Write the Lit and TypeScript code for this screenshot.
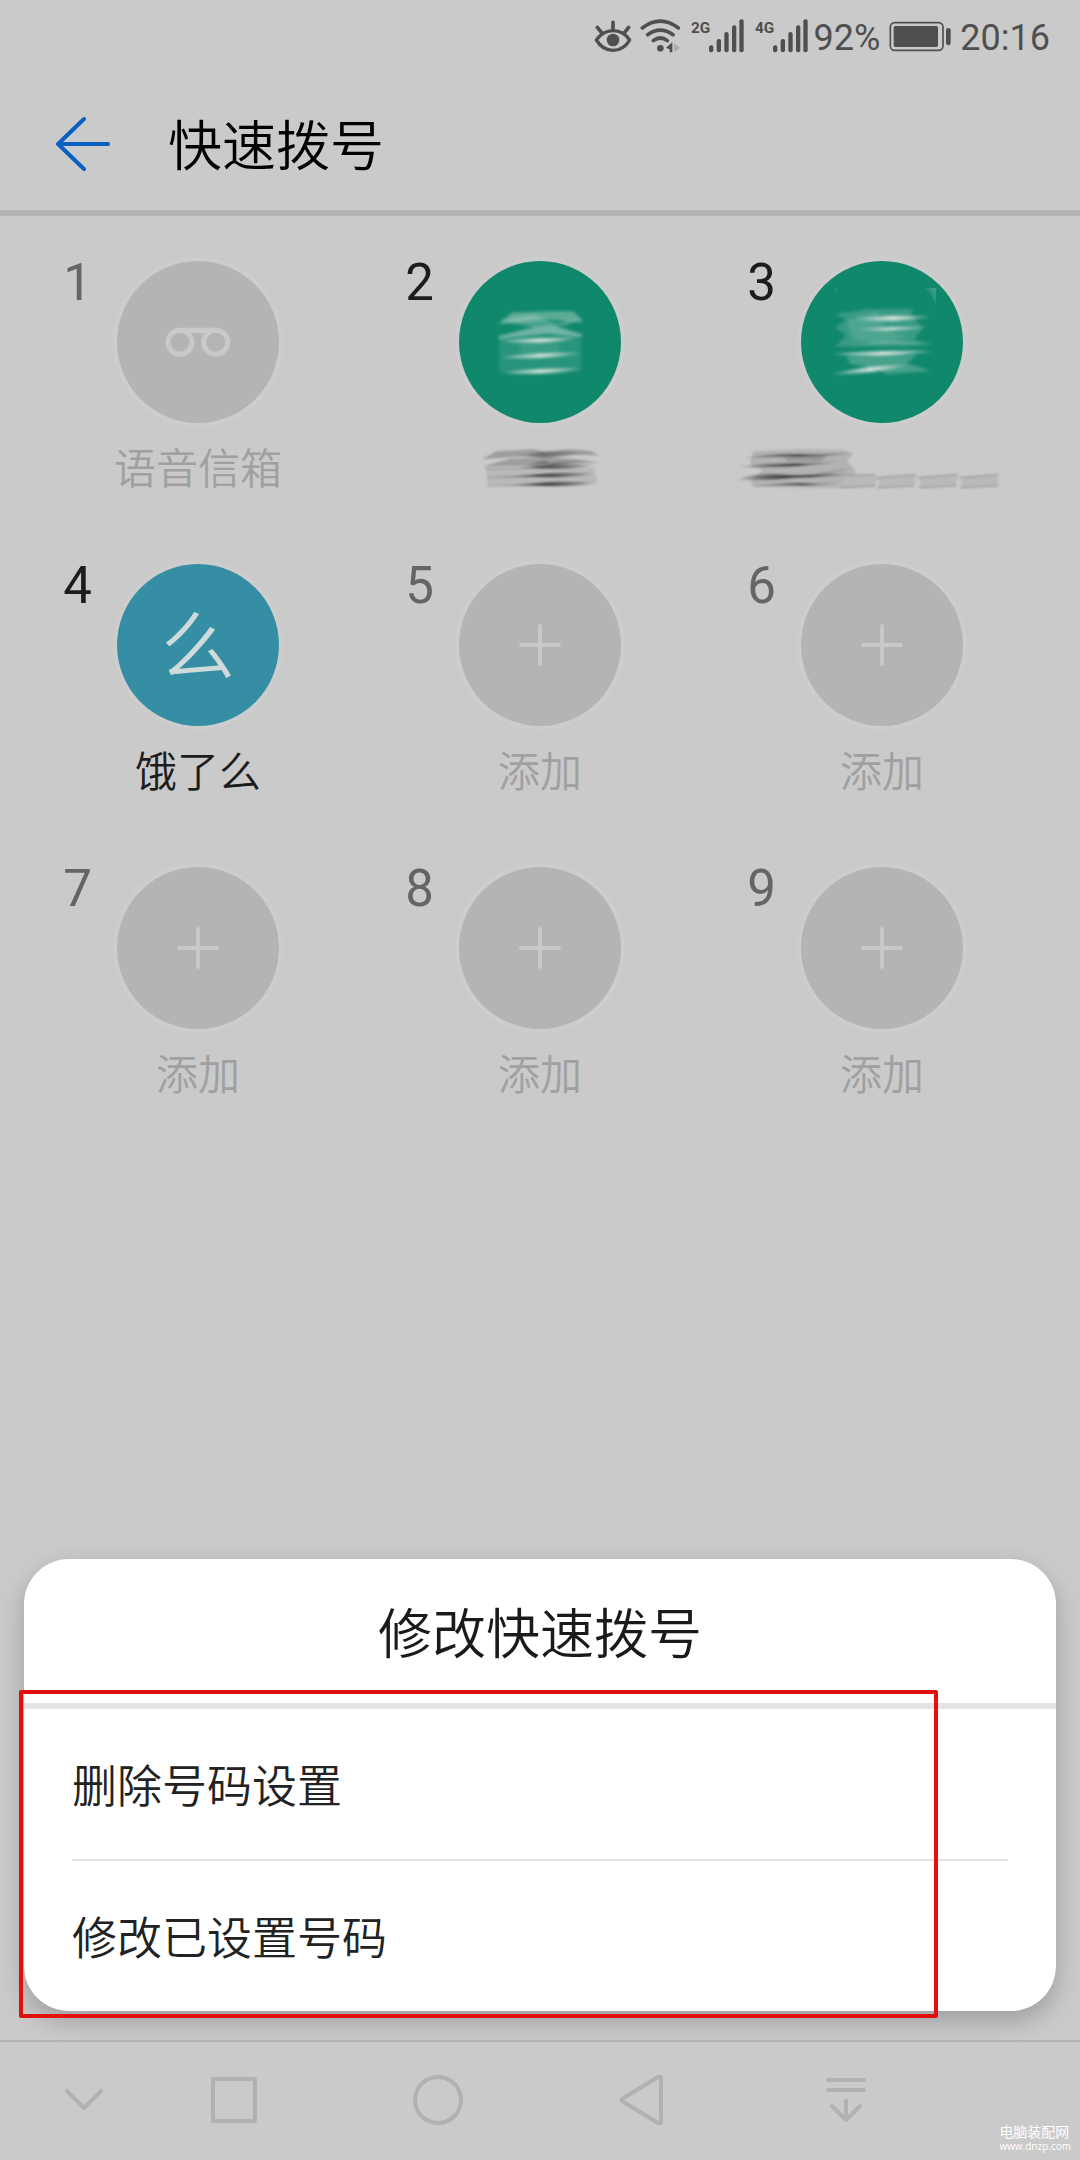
import { LitElement, html, css, svg, nothing } from "lit";
import { customElement, property } from "lit/decorators.js";
import { classMap } from "lit/directives/class-map.js";

type Kind = "voicemail" | "scribbleA" | "scribbleB" | "contact" | "add";

interface Slot {
  digit: number;
  kind: Kind;
  label: string;
}

const SLOTS: Slot[] = [
  { digit: 1, kind: "voicemail", label: "语音信箱" },
  { digit: 2, kind: "scribbleA", label: "" },
  { digit: 3, kind: "scribbleB", label: "" },
  { digit: 4, kind: "contact", label: "饿了么" },
  { digit: 5, kind: "add", label: "添加" },
  { digit: 6, kind: "add", label: "添加" },
  { digit: 7, kind: "add", label: "添加" },
  { digit: 8, kind: "add", label: "添加" },
  { digit: 9, kind: "add", label: "添加" },
];

const FONT = css`"Roboto", "Noto Sans CJK SC", sans-serif`;

@customElement("status-bar")
class StatusBar extends LitElement {
  static styles = css`
    :host {
      display: flex;
      align-items: center;
      justify-content: flex-end;
      gap: 4px;
      height: 74px;
      padding: 0 30px 4px 0;
      color: #4f4f4f;
      font: 400 36px/40px ${FONT};
    }
    svg {
      display: block;
      height: 40px;
      flex: none;
    }
    span {
      padding-top: 2px;
    }
    .signals {
      display: flex;
      gap: 8px;
    }
    .net {
      font: 700 46px "Roboto", sans-serif;
      fill: currentColor;
    }
  `;

  private signal(name: string) {
    return html`<svg width="56" viewBox="327 51 168 120" fill="currentColor" role="img" aria-label=${name}>
      <text class="net" x="330" y="98">${name}</text>
      <rect x="384" y="136" width="13" height="21" rx="6" />
      <rect x="407" y="117" width="13" height="40" rx="6" />
      <rect x="430" y="96" width="13" height="61" rx="6" />
      <rect x="453" y="76" width="13" height="81" rx="6" />
      <rect x="475" y="58" width="13" height="99" rx="6" />
    </svg>`;
  }

  render() {
    return html`
      <svg width="40" viewBox="42 51 120 120" fill="none" stroke="currentColor" stroke-width="10" stroke-linecap="round" stroke-linejoin="round">
        <path d="M49 120C62 102 79 92 99 92S137 102 149 120C137 141 119 151 99 151S62 141 49 120Z" />
        <circle cx="99" cy="120" r="19" fill="currentColor" stroke="none" />
        <path d="M99 67V88M52 82L64 97M146 82L134 97" stroke-width="11" />
      </svg>
      <svg width="48" viewBox="174 51 144 120" fill="none" stroke="currentColor" stroke-width="11" stroke-linecap="round">
        <path d="M187 84Q241 43 295 84M203 104Q241 77 279 104M220 122Q241 106 262 122" />
        <circle cx="241" cy="145" r="10" fill="currentColor" stroke="none" />
        <path d="M258 143L277 127V157H269V148Z" fill="currentColor" stroke="none" />
        <path d="M282 130L300 143L282 156Z" fill="#ababab" stroke="none" />
      </svg>
      <div class="signals">${this.signal("2G")}${this.signal("4G")}</div>
      <span>92%</span>
      <svg width="72" viewBox="912 51 216 120" fill="currentColor">
        <rect x="931" y="68" width="158" height="83" rx="13" fill="none" stroke="currentColor" stroke-width="5" />
        <rect x="941" y="78" width="133" height="63" rx="5" />
        <rect x="1098" y="84" width="14" height="52" rx="7" />
      </svg>
      <span>20:16</span>
    `;
  }
}

@customElement("dial-slot")
class DialSlot extends LitElement {
  @property({ attribute: false }) slotData!: Slot;

  static styles = css`
    :host {
      display: block;
      color: #1c1c1c;
    }
    .cell {
      display: grid;
      grid-template-columns: 1fr auto 1fr;
      row-gap: 23px;
      width: 100%;
      padding: 0;
      border: 0;
      background: none;
      color: inherit;
      font: 400 42px/48px ${FONT};
    }
    .digit {
      padding-right: 25px;
      text-align: right;
      font-size: 51px;
      line-height: 44px;
    }
    .disc {
      display: grid;
      place-items: center;
      width: 162px;
      height: 162px;
      border-radius: 50%;
      background: #b4b4b4;
      box-shadow: 0 0 0 4px #cdcdcd;
      overflow: hidden;
    }
    .disc svg {
      display: block;
      width: 100%;
      height: 100%;
    }
    .green {
      background: #10886c;
    }
    .blue {
      background: #368ea4;
    }
    .initial {
      padding-top: 6px;
      color: #cfdbdb;
      font-size: 74px;
      line-height: 80px;
      font-weight: 350;
    }
    .label {
      grid-column: 1 / -1;
      height: 48px;
      font-weight: 350;
      text-align: center;
      white-space: nowrap;
    }
    .label svg {
      display: block;
      width: 100%;
      height: 50px;
    }
    .muted .digit {
      color: #656565;
    }
    .muted .label {
      color: #a0a0a0;
    }
  `;

  private disc(kind: Kind) {
    switch (kind) {
      case "voicemail":
        return html`<svg viewBox="232 62 486 486" fill="none" stroke="#c9c9c9" stroke-width="15">
          <circle cx="421" cy="306" r="36" />
          <circle cx="528" cy="306" r="36" />
          <path d="M421 270H528" stroke-width="16" />
        </svg>`;
      case "add":
        return html`<svg viewBox="0 0 486 486" stroke="#c9c9c9" stroke-width="12" stroke-linecap="round">
          <path d="M186 243H300M243 186V300" />
        </svg>`;
      case "contact":
        return html`<span class="initial">么</span>`;
      case "scribbleA":
        return html`<svg viewBox="177 63 486 486">
          <defs>
            <filter id="soft"><feGaussianBlur stdDeviation="4" /></filter>
            <linearGradient id="streak">
              <stop offset="0" stop-color="#d5e2dc" stop-opacity="0.1" />
              <stop offset="0.5" stop-color="#d5e2dc" stop-opacity="1" />
              <stop offset="1" stop-color="#d5e2dc" stop-opacity="0.1" />
            </linearGradient>
          </defs>
          <g filter="url(#soft)">
            <path d="M298 300H544V394L420 402L298 394Z" fill="#fff" opacity="0.1" />
            <rect x="360" y="312" width="120" height="28" fill="#fff" opacity="0.08" />
            <path d="M296 252L335 218L440 214L520 214L546 240V248L440 238Z" fill="#cfe0d9" opacity="0.4" />
            <path d="M296 242L400 224L470 250L546 232L500 256L400 262Z" fill="#cfe0d9" opacity="0.3" />
            <path d="M296 298V288L400 262L460 256L546 282V292L440 282L340 292Z" fill="#cfe0d9" opacity="0.5" />
            <path d="M304 302Q420 314 536 294Q430 292 304 302Z" fill="url(#streak)" stroke="url(#streak)" stroke-width="4" />
            <path d="M306 352Q420 356 540 340Q430 338 306 352Z" fill="url(#streak)" stroke="url(#streak)" stroke-width="4" />
            <path d="M306 398Q430 404 540 386Q420 386 306 398Z" fill="url(#streak)" stroke="url(#streak)" stroke-width="4" />
          </g>
        </svg>`;
      case "scribbleB":
        return html`<svg viewBox="243 63 486 486">
          <defs>
            <filter id="soft"><feGaussianBlur stdDeviation="4" /></filter>
            <linearGradient id="streak">
              <stop offset="0" stop-color="#d5e2dc" stop-opacity="0.15" />
              <stop offset="0.5" stop-color="#d5e2dc" stop-opacity="1" />
              <stop offset="1" stop-color="#d5e2dc" stop-opacity="0.1" />
            </linearGradient>
            <linearGradient id="corner" x1="1" y1="0" x2="0.3" y2="0.6">
              <stop offset="0" stop-color="#fff" stop-opacity="0.22" />
              <stop offset="1" stop-color="#fff" stop-opacity="0" />
            </linearGradient>
          </defs>
          <path d="M612 144H648V200Q640 164 612 144Z" fill="url(#corner)" />
          <path d="M340 144H354L346 164Z" fill="#fff" opacity="0.06" />
          <g filter="url(#soft)">
            <path d="M345 222L440 208L580 206L570 226L610 262L580 300L636 312L560 320L345 320L380 286L345 262L380 240Z" fill="#cfe0d9" opacity="0.22" />
            <path d="M380 240L470 214L500 270L560 290L500 310L400 300Z" fill="#cfe0d9" opacity="0.14" />
            <path d="M380 350L590 346L560 370L632 392L500 402L470 386L390 372Z" fill="#cfe0d9" opacity="0.28" />
            <path d="M410 236Q520 248 626 230Q520 224 410 236Z" fill="url(#streak)" stroke="url(#streak)" stroke-width="3" />
            <path d="M420 268Q520 276 616 262Q520 260 420 268Z" fill="url(#streak)" stroke="url(#streak)" stroke-width="2" />
            <path d="M380 316Q470 312 500 308L636 312Q530 296 380 316Z" fill="url(#streak)" opacity="0.7" />
            <path d="M344 342Q490 352 636 334Q480 332 344 342Z" fill="url(#streak)" stroke="url(#streak)" stroke-width="4" />
            <path d="M344 402Q470 398 560 376Q450 376 344 402Z" fill="url(#streak)" stroke="url(#streak)" stroke-width="3" />
          </g>
        </svg>`;
    }
  }

  private label(slot: Slot) {
    const gradient = svg`<defs>
      <filter id="haze" x="-10%" y="-20%" width="120%" height="140%"><feGaussianBlur stdDeviation="3" /></filter>
      <linearGradient id="ink">
        <stop offset="0" stop-color="#3c3c3c" stop-opacity="0.25" />
        <stop offset="0.5" stop-color="#3c3c3c" stop-opacity="0.95" />
        <stop offset="1" stop-color="#3c3c3c" stop-opacity="0.25" />
      </linearGradient>
    </defs>`;
    if (slot.kind === "scribbleA") {
      return html`<svg viewBox="-93 618 1026 150">
        ${gradient}
        <g filter="url(#haze)">
          <path d="M258 684H582L592 728L440 738L262 738Z" fill="#a8a8a8" opacity="0.5" />
          <path d="M246 658L290 634L400 628L440 636L500 628L570 632L596 646L520 644L440 656L380 648Z" fill="#808080" opacity="0.6" />
          <path d="M246 680L330 656L420 652L520 656L598 668L520 672L450 668L400 678Z" fill="#808080" opacity="0.6" />
          <path d="M290 645Q360 652 400 640T560 640L440 652Z" fill="url(#ink)" opacity="0.5" />
          <path d="M380 678Q430 654 450 668L560 662L450 676Z" fill="url(#ink)" opacity="0.7" />
          <path d="M258 686Q340 688 420 678T580 678Q500 690 440 686T258 690Z" fill="url(#ink)" />
          <path d="M262 712Q340 710 420 702T580 702Q500 714 440 712T262 714Z" fill="url(#ink)" />
          <path d="M262 738Q340 736 420 728T590 730Q500 742 440 738T262 740Z" fill="url(#ink)" />
        </g>
      </svg>`;
    }
    if (slot.kind === "scribbleB") {
      return html`<svg viewBox="-27 618 1026 150">
        ${gradient}
        <g filter="url(#haze)">
          <path d="M100 634L240 628L370 630L400 640L380 664L406 690L400 740L340 744L100 740L90 720L130 690L90 676Z" fill="#9c9c9c" opacity="0.5" />
          <path d="M74 654Q160 640 230 642T402 638Q320 650 240 650T74 654Z" fill="url(#ink)" />
          <path d="M60 680Q150 668 240 670T402 658Q320 672 240 678T60 680Z" fill="url(#ink)" />
          <path d="M190 640Q240 660 330 640L300 666L200 664Z" fill="#7a7a7a" opacity="0.45" />
          <path d="M56 718Q110 696 200 704T400 684Q300 700 230 712T56 718Z" fill="url(#ink)" />
          <path d="M130 710Q260 702 400 702Q300 714 130 716Z" fill="url(#ink)" />
          <path d="M96 740Q200 726 260 730T390 722Q300 738 230 736T96 740Z" fill="url(#ink)" />
        </g>
        <g fill="#b9b9b9" filter="url(#haze)">
          <path d="M380 706L464 704L470 712L466 736L350 744Z" />
          <path d="M478 714L588 704L582 736L474 744Z" />
          <path d="M602 714L714 704L708 736L598 744Z" />
          <path d="M728 714L834 704V736L722 744Z" />
        </g>
        <g fill="none" stroke="#9a9a9a" stroke-width="4" filter="url(#haze)">
          <path d="M380 706L464 704M468 714L588 704M592 714L714 704M718 714L834 704" />
          <path d="M360 742L466 738M474 743L582 737M598 743L708 737M722 743L834 737" />
        </g>
      </svg>`;
    }
    return slot.label;
  }

  render() {
    const s = this.slotData;
    if (!s) return nothing;
    const muted = s.kind === "voicemail" || s.kind === "add";
    return html`<button type="button" class=${classMap({ cell: true, muted })}>
      <span class="digit">${s.digit}</span>
      <span
        class=${classMap({
          disc: true,
          green: s.kind === "scribbleA" || s.kind === "scribbleB",
          blue: s.kind === "contact",
        })}
        >${this.disc(s.kind)}</span
      >
      <span></span>
      <span class="label">${this.label(s)}</span>
    </button>`;
  }
}

@customElement("action-sheet")
class ActionSheet extends LitElement {
  static styles = css`
    :host {
      display: block;
      position: relative;
      font: 350 45px/54px ${FONT};
      color: #222;
    }
    .sheet {
      border-radius: 45px;
      background: #fff;
      box-shadow: 0 10px 24px rgba(0, 0, 0, 0.22);
      overflow: hidden;
    }
    .title {
      margin: 0;
      padding: 41px 0 31px;
      border-bottom: 6px solid #e4e4e4;
      font-size: 54px;
      line-height: 72px;
      font-weight: 350;
      text-align: center;
      color: #1a1a1a;
    }
    .actions {
      margin: 0;
      padding: 0 48px;
      list-style: none;
    }
    .actions li + li {
      border-top: 2px solid #e4e4e4;
    }
    .action {
      width: 100%;
      padding: 52px 0 44px;
      border: 0;
      background: none;
      color: inherit;
      font: inherit;
      text-align: left;
    }
    .highlight {
      position: absolute;
      inset: 131px 118px -7px -5px;
      border: 4px solid #e01010;
      border-radius: 2px;
      pointer-events: none;
    }
  `;

  render() {
    return html`
      <section class="sheet" role="dialog" aria-labelledby="sheet-title">
        <h2 class="title" id="sheet-title">修改快速拨号</h2>
        <ul class="actions">
          <li><button type="button" class="action">删除号码设置</button></li>
          <li><button type="button" class="action">修改已设置号码</button></li>
        </ul>
      </section>
      <div class="highlight"></div>
    `;
  }
}

@customElement("nav-bar")
class NavBar extends LitElement {
  static styles = css`
    :host {
      display: grid;
      grid-template-columns: 132px repeat(4, 1fr) 132px;
      align-items: center;
      position: relative;
      height: 116px;
      padding-bottom: 2px;
      border-top: 2px solid #b4b4b4;
    }
    .key {
      display: grid;
      place-items: center;
      height: 100%;
      padding: 0;
      border: 0;
      background: none;
      color: #b1b1b1;
    }
    .first {
      padding-left: 36px;
    }
    svg {
      display: block;
      width: 56px;
      height: 56px;
      fill: none;
      stroke: currentColor;
      stroke-width: 4;
      stroke-linecap: round;
      stroke-linejoin: round;
    }
    .mark {
      position: absolute;
      right: 9px;
      bottom: 7px;
      color: #fff;
      font: 400 14px/18px "Noto Sans CJK SC", sans-serif;
      text-align: left;
    }
    .site {
      display: block;
      font: 400 10px/13px "Open Sans", sans-serif;
    }
  `;

  render() {
    return html`
      <button type="button" class="key first" aria-label="收起">
        <svg viewBox="0 0 56 56"><path d="M11 19L28 36L45 19" /></svg>
      </button>
      <button type="button" class="key" aria-label="最近任务">
        <svg viewBox="0 0 56 56"><rect x="7" y="7" width="42" height="42" rx="1" /></svg>
      </button>
      <button type="button" class="key" aria-label="主屏幕">
        <svg viewBox="0 0 56 56"><circle cx="28" cy="28" r="23" /></svg>
      </button>
      <button type="button" class="key" aria-label="返回">
        <svg viewBox="0 0 56 56"><path d="M47 5V51Q46 52 44 51L8 29Q7 28 8 27L44 5Q46 4 47 5Z" /></svg>
      </button>
      <button type="button" class="key" aria-label="通知栏">
        <svg viewBox="0 0 56 56"><path d="M10 8H46M10 18H46M28 29V48M14 34L28 48L42 34" /></svg>
      </button>
      <div class="mark">电脑装配网<span class="site">www.dnzp.com</span></div>
    `;
  }
}

@customElement("app-root")
class AppRoot extends LitElement {
  static styles = css`
    :host {
      display: flex;
      flex-direction: column;
      min-height: 100vh;
      background: #cacaca;
      color: #000;
      font: 400 42px/48px ${FONT};
    }
    .header {
      display: flex;
      align-items: center;
      gap: 56px;
      padding: 30px 54px;
      border-bottom: 6px solid #b4b4b4;
    }
    .back {
      display: block;
      padding: 0;
      border: 0;
      background: none;
      color: #0860c2;
    }
    .back svg {
      display: block;
      width: 58px;
      height: 58px;
    }
    .title {
      margin: 0;
      padding-top: 8px;
      font-size: 54px;
      line-height: 64px;
      font-weight: 350;
    }
    .slots {
      display: grid;
      grid-template-columns: repeat(3, 1fr);
      row-gap: 70px;
      padding: 45px 27px;
    }
    .sheet {
      margin: auto 24px 29px;
    }
  `;

  render() {
    return html`
      <status-bar></status-bar>
      <header class="header">
        <button type="button" class="back" aria-label="返回">
          <svg viewBox="0 0 58 58" fill="none" stroke="currentColor" stroke-width="4" stroke-linecap="round" stroke-linejoin="round">
            <path d="M30 4L4 29L30 54M4 29H54" />
          </svg>
        </button>
        <h1 class="title">快速拨号</h1>
      </header>
      <main class="slots">
        ${SLOTS.map((s) => html`<dial-slot .slotData=${s}></dial-slot>`)}
      </main>
      <action-sheet class="sheet"></action-sheet>
      <nav-bar></nav-bar>
    `;
  }
}
